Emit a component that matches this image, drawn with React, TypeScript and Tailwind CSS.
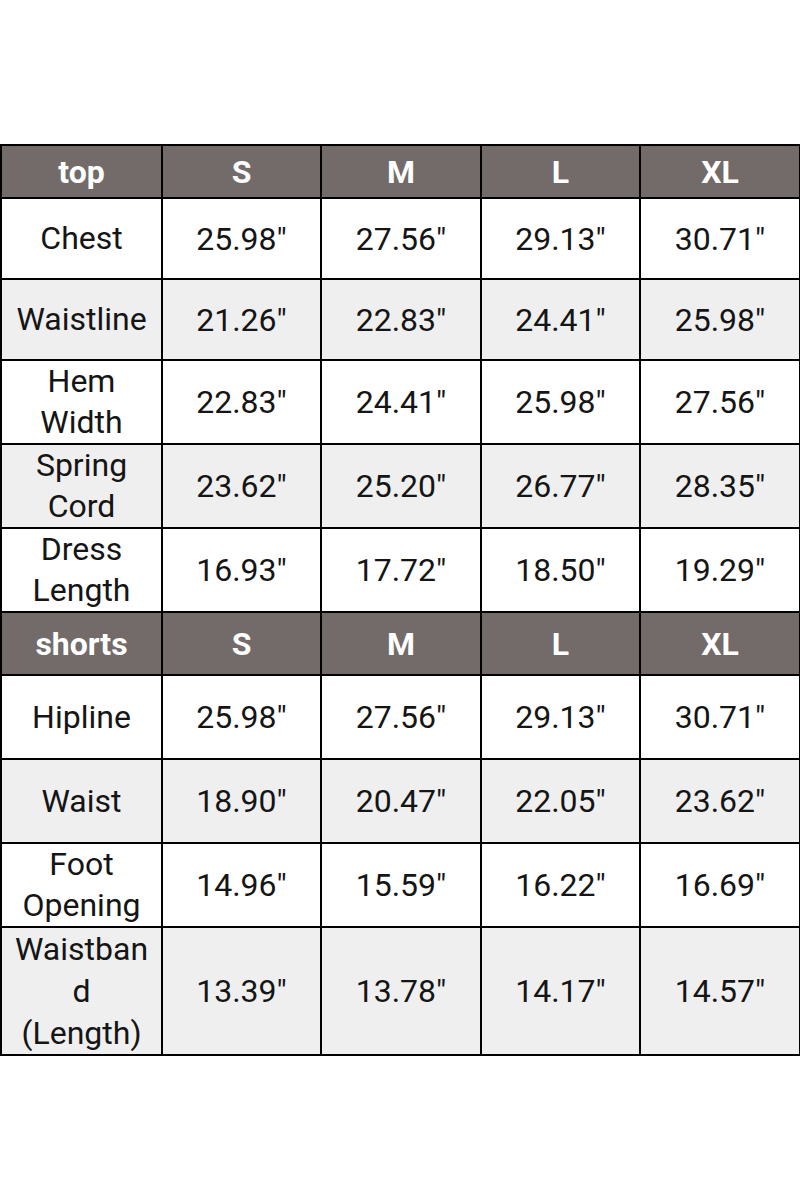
const rowsTop = [
  { label: ['Chest'], vals: ['25.98"', '27.56"', '29.13"', '30.71"'], h: 'h-[81px]', bg: 'bg-white' },
  { label: ['Waistline'], vals: ['21.26"', '22.83"', '24.41"', '25.98"'], h: 'h-[81px]', bg: 'bg-[#efefef]' },
  { label: ['Hem', 'Width'], vals: ['22.83"', '24.41"', '25.98"', '27.56"'], h: 'h-[83px]', bg: 'bg-white' },
  { label: ['Spring', 'Cord'], vals: ['23.62"', '25.20"', '26.77"', '28.35"'], h: 'h-[83px]', bg: 'bg-[#efefef]' },
  { label: ['Dress', 'Length'], vals: ['16.93"', '17.72"', '18.50"', '19.29"'], h: 'h-[83px]', bg: 'bg-white' },
];

const rowsShorts = [
  { label: ['Hipline'], vals: ['25.98"', '27.56"', '29.13"', '30.71"'], h: 'h-[84px]', bg: 'bg-white' },
  { label: ['Waist'], vals: ['18.90"', '20.47"', '22.05"', '23.62"'], h: 'h-[84px]', bg: 'bg-[#efefef]' },
  { label: ['Foot', 'Opening'], vals: ['14.96"', '15.59"', '16.22"', '16.69"'], h: 'h-[84px]', bg: 'bg-white' },
  { label: ['Waistban', 'd', '(Length)'], vals: ['13.39"', '13.78"', '14.17"', '14.57"'], h: 'h-[126px]', bg: 'bg-[#efefef]' },
];

const sizes = ['S', 'M', 'L', 'XL'];

function HeaderRow({ title, h }: { title: string; h: string }) {
  return (
    <tr className={`${h} bg-[#726b6a] text-white font-bold`}>
      <td className="border-2 border-black p-0 text-center">{title}</td>
      {sizes.map((s) => (
        <td key={s} className="border-2 border-black p-0 text-center">{s}</td>
      ))}
    </tr>
  );
}

type Row = { label: string[]; vals: string[]; h: string; bg: string };

function DataRow({ row }: { row: Row }) {
  const lh = row.label.length > 2 ? 'leading-[42px]' : 'leading-[41px]';
  return (
    <tr className={`${row.h} ${row.bg}`}>
      <td className={`border-2 border-black p-0 text-center whitespace-nowrap ${lh}`}>
        {row.label.map((l, i) => (
          <div key={i}>{l}</div>
        ))}
      </td>
      {row.vals.map((v, i) => (
        <td key={i} className="border-2 border-black p-0 text-center">{v}</td>
      ))}
    </tr>
  );
}

export default function App() {
  return (
    <div className="w-[800px] h-[1200px] bg-white pt-[144px] font-['Roboto',sans-serif] text-[32px] text-[#151515]">
      <table className="w-[799px] border-collapse table-fixed">
        <colgroup>
          <col className="w-[161px]" />
          <col className="w-[159px]" />
          <col className="w-[160px]" />
          <col className="w-[159px]" />
          <col className="w-[160px]" />
        </colgroup>
        <tbody>
          <HeaderRow title="top" h="h-[53px]" />
          {rowsTop.map((r) => (
            <DataRow key={r.label.join('')} row={r} />
          ))}
          <HeaderRow title="shorts" h="h-[63px]" />
          {rowsShorts.map((r) => (
            <DataRow key={r.label.join('')} row={r} />
          ))}
        </tbody>
      </table>
    </div>
  );
}
